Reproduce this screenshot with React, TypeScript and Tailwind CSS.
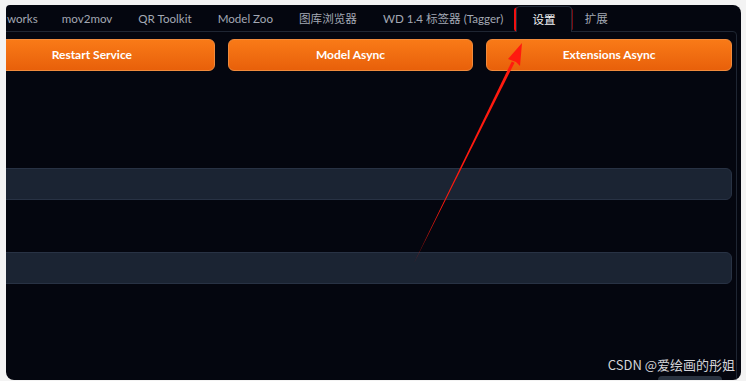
import React from 'react';

const tabs = ['works', 'mov2mov', 'QR Toolkit', 'Model Zoo', '图库浏览器', 'WD 1.4 标签器 (Tagger)', '设置', '扩展'];
const actions = ['Restart Service', 'Model Async', 'Extensions Async'];

const App: React.FC = () => {
    return (
        <div className="w-[746px] h-[381px] bg-[#f3f3f3] pt-[5px] pl-[6px] pr-[5px] pb-[1px] relative overflow-hidden font-['Lato','Noto_Sans_CJK_SC',sans-serif]">
            <div className="h-full bg-[#04060f] rounded-[8px] rounded-tl-[4px] overflow-hidden relative">
                {/* tab bar */}
                <div className="flex h-[26px] items-stretch pt-[1px] text-[11.6px] text-[#a3a8b3]">
                    {tabs.map((t, i) => {
                        const active = t === '设置';
                        let cls = 'px-[13px] flex items-center whitespace-nowrap';
                        if (i === 0) cls = 'pl-[1px] pr-[11px] flex items-center whitespace-nowrap';
                        if (active) cls = 'px-[15px] flex items-center border border-b-0 border-[#222a37] rounded-t-[4px] bg-[#04060f] text-[#f3f4f6] relative z-10 mb-[-1px]';
                        return (
                            <div key={t} className={cls}>
                                {t}
                            </div>
                        );
                    })}
                </div>

                {/* settings panel */}
                <div className="w-[769px] ml-[-38px] border border-[#1f2633] rounded-tr-[4px] pt-[7px] pr-[4px] h-[360px]">
                    <div className="grid grid-cols-3 gap-[13px]">
                        {actions.map((a) => (
                            <button
                                key={a}
                                className="h-[32px] rounded-[6px] bg-gradient-to-b from-[#f97a17] to-[#e8600a] text-white text-[12px] font-bold border border-[#f08a3c]"
                            >
                                {a}
                            </button>
                        ))}
                    </div>
                    <div className="mt-[97px] h-[32px] rounded-[6px] bg-[#1b2433] border border-[#283244]"></div>
                    <div className="mt-[52px] h-[32px] rounded-[6px] bg-[#1b2433] border border-[#283244]"></div>
                </div>

                <div className="absolute right-[6px] bottom-[9px] text-[13px] text-[#d4d4d8] font-['Noto_Sans_CJK_SC',sans-serif] leading-none">
                    CSDN @爱绘画的彤姐
                </div>
                <div className="absolute left-[652px] bottom-0 w-[64px] h-[4px] rounded-t-[5px] bg-[#2a3340]"></div>
            </div>

            {/* red annotation */}
            <svg className="absolute left-0 top-0 pointer-events-none" width="746" height="381" viewBox="0 0 746 381">
                <rect x="515" y="8.5" width="56.5" height="22" rx="2" fill="none" stroke="#f21010" strokeWidth="2" />
                <polygon points="414,263 514.5,62.7 511.8,61.4" fill="#ff1a0f" />
                <polygon points="522,43 520,66 516,62 508,59" fill="#ff1a0f" />
            </svg>
        </div>
    );
};

export default App;
